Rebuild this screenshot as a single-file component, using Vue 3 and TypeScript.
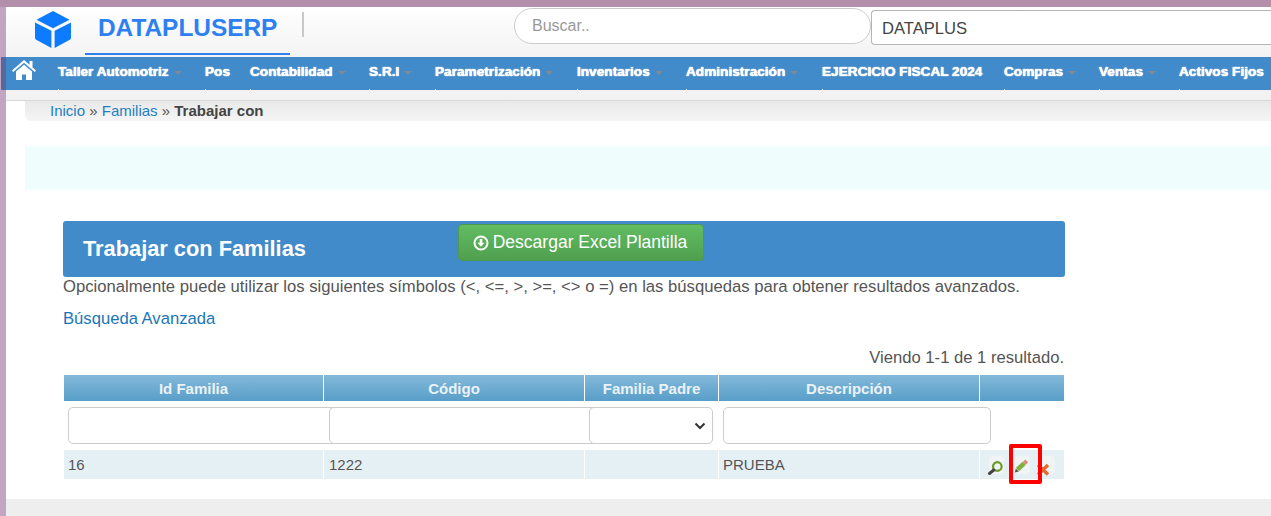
<script setup lang="ts">
interface MenuItem { label: string; caret: boolean; width: number }
const menu: MenuItem[] = [
  { label: 'Taller Automotriz', caret: true, width: 147 },
  { label: 'Pos', caret: false, width: 45 },
  { label: 'Contabilidad', caret: true, width: 119 },
  { label: 'S.R.I', caret: true, width: 66 },
  { label: 'Parametrización', caret: true, width: 142 },
  { label: 'Inventarios', caret: true, width: 109 },
  { label: 'Administración', caret: true, width: 136 },
  { label: 'EJERCICIO FISCAL 2024', caret: false, width: 182 },
  { label: 'Compras', caret: true, width: 95 },
  { label: 'Ventas', caret: true, width: 80 },
  { label: 'Activos Fijos', caret: false, width: 100 }
]
</script>

<template>
  <div class="page">
    <header class="top">
      <div class="brand">
        <svg class="cube" viewBox="0 0 36 37" width="36" height="37" aria-hidden="true">
          <path fill="#0d7bff" d="M18 0 34.500 8.800 18 17.200 1.500 8.800Z" />
          <path fill="#0d7bff" d="M0 11.500 16.400 19.800V37L1.200 28.800Q0 28.100 0 26.800Z" />
          <path fill="#0d7bff" d="M36 11.500 19.600 19.800V37l15.200-8.200q1.200-.7 1.200-2Z" />
        </svg>
        <div class="brand-name">DATAPLUSERP</div>
        <div class="brand-sep"></div>
      </div>
      <div class="search">Buscar..</div>
      <div class="company">DATAPLUS</div>
    </header>

    <nav class="menu">
      <svg class="home" viewBox="0 0 24 20" width="24" height="20" aria-hidden="true">
        <path fill="#fff" d="M12 0 0 10.500 1.200 12 12 2.800 22.800 12 24 10.500 20.500 7.400V1h-3v3.800Z" />
        <path fill="#fff" d="M12 4.800 4 11.600V20h6v-5.500h4V20h6v-8.400Z" />
      </svg>
      <div v-for="item in menu" :key="item.label" class="menu-item" :style="{ width: item.width + 'px' }">
        <span>{{ item.label }}</span><i v-if="item.caret" class="caret"></i>
      </div>
    </nav>
    <div class="menu-under"></div>

    <div class="crumbs">
      <a>Inicio</a> » <a>Familias</a> » <b>Trabajar con</b>
    </div>
    <div class="notice"></div>

    <main class="content">
      <div class="title-bar">
        <h1>Trabajar con Familias</h1>
        <div class="excel">
          <svg viewBox="0 0 16 16" width="16" height="16" aria-hidden="true">
            <circle cx="8" cy="8" r="6.500" fill="none" stroke="#fff" stroke-width="2" />
            <path fill="#fff" d="M6.700 4h2.600v3.700h2.200L8 11.800 4.500 7.700h2.200Z" />
          </svg>
          Descargar Excel Plantilla
        </div>
      </div>
      <p class="hint">Opcionalmente puede utilizar los siguientes símbolos (&lt;, &lt;=, &gt;, &gt;=, &lt;&gt; o =) en las búsquedas para obtener resultados avanzados.</p>
      <a class="advanced">Búsqueda Avanzada</a>
      <div class="summary">Viendo 1-1 de 1 resultado.</div>

      <div class="grid">
        <div class="th">Id Familia</div>
        <div class="th">Código</div>
        <div class="th">Familia Padre</div>
        <div class="th">Descripción</div>
        <div class="th"></div>

        <div class="filter"><div class="field wide"></div></div>
        <div class="filter"><div class="field wide second"></div></div>
        <div class="filter">
          <div class="field select">
            <svg viewBox="0 0 12 8" width="12" height="8" aria-hidden="true"><path d="M1.500 1.500 6 6l4.500-4.500" fill="none" stroke="#333" stroke-width="2" /></svg>
          </div>
        </div>
        <div class="filter"><div class="field desc"></div></div>
        <div class="filter"></div>

        <div class="td">16</div>
        <div class="td code">1222</div>
        <div class="td"></div>
        <div class="td">PRUEBA</div>
        <div class="td actions">
          <span class="ico">
            <svg viewBox="0 0 15 18" width="15" height="18" aria-hidden="true">
              <circle cx="8.300" cy="10.500" r="4.300" fill="none" stroke="#6c9a25" stroke-width="2.200" />
              <path d="M4.800 14 0.500 17.500" stroke="#444" stroke-width="3" stroke-linecap="round" />
            </svg>
          </span>
          <span class="ico wide-ico">
            <svg viewBox="0 0 16 18" width="16" height="18" aria-hidden="true">
              <path d="M3.500 13.500 10 7.500" stroke="#7fb241" stroke-width="4.500" />
              <path d="M10 7.500 12.800 5" stroke="#d98a78" stroke-width="4" />
              <path d="M0.800 16.500 1.800 12.500 4.800 15.500Z" fill="#5a5a3c" />
            </svg>
          </span>
          <span class="ico">
            <svg viewBox="0 0 15 18" width="15" height="18" aria-hidden="true">
              <path d="M-2 9 8 18.500M8 9-2 18.500" stroke="#e8672f" stroke-width="3.400" />
            </svg>
          </span>
          <div class="mark"></div>
        </div>
      </div>
    </main>
    <footer class="foot"></footer>
  </div>
</template>

<style>
html, body { margin: 0; overflow: hidden; background: #fff; }
</style>

<style scoped>
.page {
  position: relative;
  width: 1271px;
  height: 516px;
  box-sizing: border-box;
  overflow: hidden;
  padding: 7px 0 0 6px;
  font-family: "Liberation Sans", Arial, sans-serif;
  color: #555;
  display: flex;
  flex-direction: column;
  background-color: #fff;
  background-image: linear-gradient(#b38fab, #b38fab), linear-gradient(#c2a5c0, #c2a5c0);
  background-size: 100% 7px, 6px 100%;
  background-repeat: no-repeat;
}
.top {
  height: 50px;
  flex: none;
  display: flex;
  background: linear-gradient(#fff, #f3f3f3);
}
.brand { width: 300px; flex: none; position: relative; display: flex; }
.cube { margin: 4px 0 0 29px; flex: none; }
.brand-name {
  width: 205px;
  height: 48px;
  flex: none;
  box-sizing: border-box;
  margin-left: 14px;
  padding: 6px 0 0 13px;
  font-size: 24.400px;
  line-height: 30px;
  font-weight: 700;
  color: #2e80f0;
  border-bottom: 2px solid #2e80f0;
}
.brand-sep { width: 2px; height: 25px; margin: 5px 0 0 12px; background: #c8c8c8; }
.search {
  margin: 1px 0 0 208px;
  width: 357px;
  height: 36px;
  box-sizing: border-box;
  flex: none;
  padding: 0 0 0 17px;
  border: 1px solid #ccc;
  border-radius: 18px;
  background: #fff;
  font-size: 16px;
  line-height: 34px;
  color: #999;
}
.company {
  margin: 3px 0 0 0;
  flex: 1;
  height: 35px;
  box-sizing: border-box;
  padding-left: 10px;
  border: 1px solid #b5b5b5;
  border-right: 0;
  border-radius: 4px 0 0 4px;
  background: #fff;
  font-size: 16.600px;
  line-height: 35px;
  color: #444;
}
.menu {
  height: 33px;
  flex: none;
  margin-left: -5px;
  display: flex;
  background: #428bca;
  box-shadow: inset 5px 0 0 #56699f;
  color: #fff;
  overflow: hidden;
}
.home { margin: 3px 0 0 11px; flex: none; }
.menu-item {
  position: relative;
  flex: none;
  box-sizing: border-box;
  padding: 7px 0 0 0;
  font-size: 13.650px;
  line-height: 16px;
  font-weight: 700;
  white-space: nowrap;
  text-shadow: 0 0 1px #fff, 0 0 1px #fff;
}
.menu-item:first-of-type { margin-left: 22px; }
.menu-item::after {
  content: "";
  position: absolute;
  left: 0;
  bottom: 0;
  width: 1px;
  height: 1px;
  background: #dbe8f4;
}
.caret {
  display: inline-block;
  margin-left: 5px;
  vertical-align: 1px;
  border-style: solid;
  border-width: 4px 4px 0;
  border-color: #7f8a94 transparent transparent;
}
.menu-under {
  height: 10px;
  flex: none;
  background: #f2f2f2;
  border-bottom: 1px solid #d8d8d8;
}
.crumbs {
  flex: none;
  margin-left: 19px;
  height: 20px;
  box-sizing: border-box;
  padding-left: 25px;
  font-size: 15px;
  line-height: 19px;
  background: linear-gradient(#e9e9e9, #f5f5f5);
  border-radius: 0 0 0 6px;
}
.crumbs a { color: #1f7fc4; }
.crumbs b { color: #444; }
.notice { flex: none; height: 44px; margin: 25px 0 0 19px; background: #f0fdfd; }
.content { flex: none; height: 309px; padding: 31px 0 0 57px; box-sizing: border-box; width: 1059px; }
.title-bar {
  position: relative;
  height: 56px;
  border-radius: 3px;
  background: #428bca;
  box-sizing: border-box;
  padding: 14px 0 0 20px;
}
.title-bar h1 { margin: 0; font-size: 21.800px; line-height: 28px; font-weight: 700; color: #fff; }
.excel {
  position: absolute;
  left: 395px;
  top: 3px;
  width: 246px;
  height: 37px;
  box-sizing: border-box;
  display: flex;
  align-items: center;
  justify-content: center;
  gap: 4px;
  padding-right: 2px;
  border: 1px solid #4d9a4d;
  border-radius: 4px;
  background: linear-gradient(#62bd62, #4f9f4f);
  color: #fff;
  font-size: 17.500px;
}
.hint { margin: 0; font-size: 16.660px; line-height: 19px; color: #555; white-space: nowrap; }
.advanced { display: block; margin-top: 13px; font-size: 16.640px; line-height: 19px; color: #1a76b8; }
.summary { margin-top: 20px; text-align: right; font-size: 16.640px; line-height: 19px; margin-right: 1px; }
.grid {
  margin-top: 8px;
  display: grid;
  grid-template-columns: 259px 260px 133px 260px 84px;
  grid-template-rows: 26px 49px 29px;
  column-gap: 1px;
  margin-left: 1px;
  width: 1000px;
}
.th {
  background: linear-gradient(#84b9d9, #589ec9);
  color: #eaf2f7;
  font-size: 15px;
  font-weight: 700;
  line-height: 27px;
  text-align: center;
}
.filter { position: relative; }
.field {
  position: absolute;
  top: 6px;
  left: 4px;
  height: 37px;
  box-sizing: border-box;
  border: 1px solid #ccc;
  border-radius: 5px;
  background: #fff;
}
.field.wide { width: 276px; }
.field.second { left: 5px; }
.field.select { width: 124px; display: flex; align-items: center; justify-content: flex-end; padding-right: 6px; }
.field.desc { width: 268px; }
.td {
  background: #e5f0f5;
  font-size: 15px;
  line-height: 29px;
  padding-left: 4px;
  color: #555;
}
.td.code { padding-left: 5px; }
.actions { position: relative; padding-left: 9px; display: flex; align-items: center; gap: 10px; }
.ico { width: 15px; height: 18px; flex: none; display: block; background: #f0f4f5; border-radius: 4px; }
.ico.wide-ico { width: 16px; }
.ico svg { display: block; overflow: visible; }
.mark {
  position: absolute;
  left: 29px;
  top: -6px;
  width: 33px;
  height: 40px;
  box-sizing: border-box;
  border: 4px solid #f00;
  border-radius: 2px;
}
.foot { flex: none; height: 17px; background: #eee; }
</style>
